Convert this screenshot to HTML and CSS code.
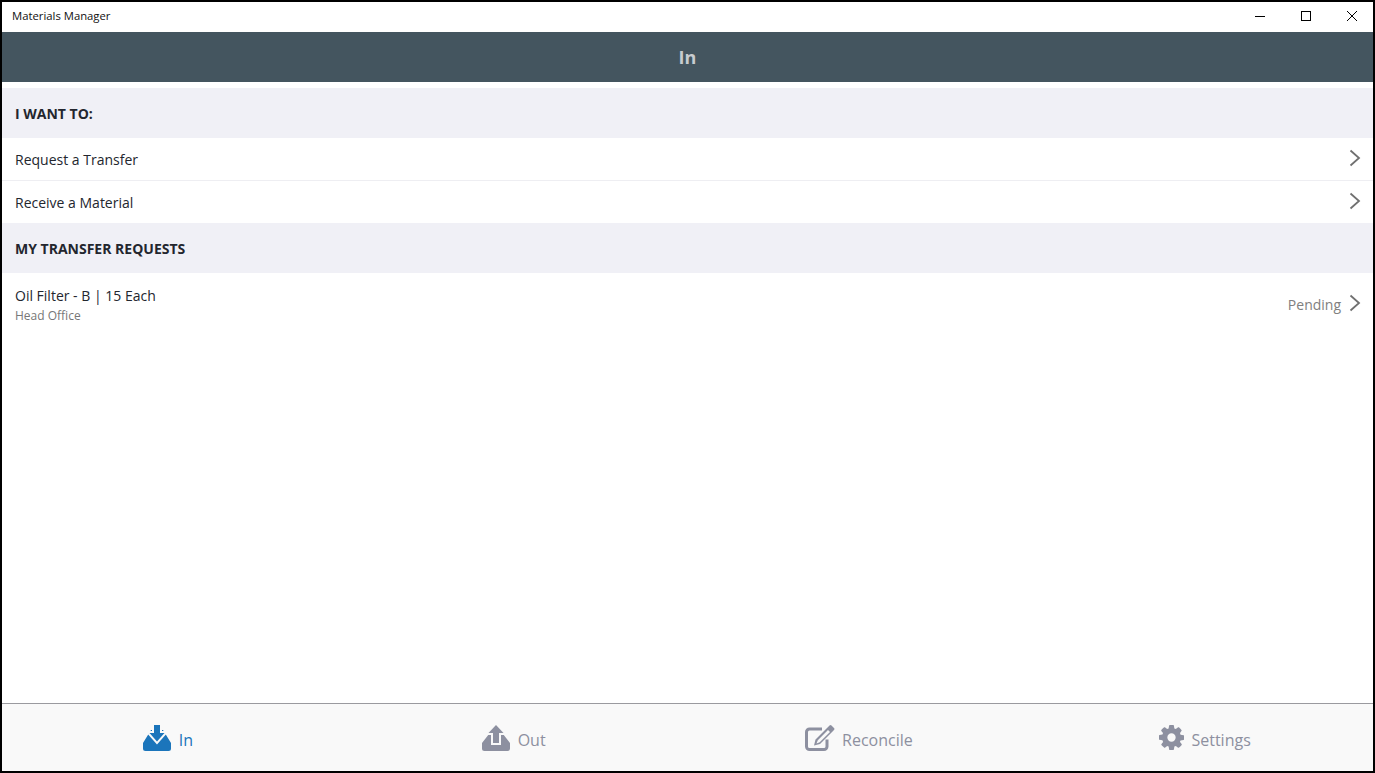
FILE: index.html
```html
<!DOCTYPE html>
<html lang="en">
<head>
<meta charset="utf-8">
<title>Materials Manager</title>
<link rel="stylesheet" href="styles.css">
</head>
<body>
<div class="window">
  <div class="titlebar">
    <span class="app-name">Materials Manager</span>
    <div class="controls">
      <svg class="ctl" viewBox="0 0 46 30"><path d="M20 14.500h10" stroke="#000" fill="none"/></svg>
      <svg class="ctl" viewBox="0 0 46 30"><rect x="20.500" y="9.500" width="9" height="9" stroke="#000" fill="none"/></svg>
      <svg class="ctl" viewBox="0 0 46 30"><path d="M20 9l10 10M30 9L20 19" stroke="#000" fill="none"/></svg>
    </div>
  </div>
  <header class="page-head">In</header>
  <main class="content">
    <div class="section-head">I WANT TO:</div>
    <div class="row line">
      <span class="row-title">Request a Transfer</span>
      <svg class="chev" viewBox="0 0 12 18"><path d="M1.500 1.500L10 9l-8.500 7.500"/></svg>
    </div>
    <div class="row">
      <span class="row-title">Receive a Material</span>
      <svg class="chev" viewBox="0 0 12 18"><path d="M1.500 1.500L10 9l-8.500 7.500"/></svg>
    </div>
    <div class="section-head">MY TRANSFER REQUESTS</div>
    <div class="row tall">
      <div class="stack">
        <span class="row-title">Oil Filter - B | 15 Each</span>
        <span class="row-sub">Head Office</span>
      </div>
      <span class="status">Pending</span>
      <svg class="chev" viewBox="0 0 12 18"><path d="M1.500 1.500L10 9l-8.500 7.500"/></svg>
    </div>
  </main>
  <nav class="tabs">
    <div class="tab active">
      <svg class="tab-icon" viewBox="0 0 30 26">
        <path class="tray" d="M9 5L1 18v5.500A2.500 2.500 0 0 0 3.500 26h23a2.500 2.500 0 0 0 2.500-2.500V18L21 5z"/>
        <path class="arrow" d="M12 0h6v8h4.500L15 16.500 7.500 8H12z"/>
      </svg>
      <span>In</span>
    </div>
    <div class="tab">
      <svg class="tab-icon" viewBox="0 0 30 26">
        <path class="tray" d="M8 9L1 18v5.500A2.500 2.500 0 0 0 3.500 26h23a2.500 2.500 0 0 0 2.500-2.500V18L22 9z"/>
        <path class="arrow" d="M15 0l7.500 8H18v10h-6V8H7.500z"/>
      </svg>
      <span>Out</span>
    </div>
    <div class="tab">
      <svg class="tab-icon" viewBox="0 0 30 26">
        <path class="outline" d="M22 14.500V21.500a3 3 0 0 1-3 3H4.500a3 3 0 0 1-3-3V7a3 3 0 0 1 3-3H17"/>
        <path class="pencil" d="M24.500 0.500a1.500 1.500 0 0 1 2 0l2.500 2.500a1.500 1.500 0 0 1 0 2L15 19l-6 1.500L10.500 14.500zM12.800 15.200l-1.300 3.400 3.200-1.400L25 7l-2-2z"/>
      </svg>
      <span>Reconcile</span>
    </div>
    <div class="tab">
      <svg class="tab-icon gear" viewBox="128 128 1536 1536">
        <path class="tray" d="M1152 896q0-106-75-181t-181-75-181 75-75 181 75 181 181 75 181-75 75-181zm512-109v222q0 12-8 23t-20 13l-185 28q-19 54-39 91 35 50 107 138 10 12 10 25t-9 23q-27 37-99 108t-94 71q-12 0-26-9l-138-108q-44 23-91 38-16 136-29 186-7 28-36 28h-222q-14 0-24.500-8.500t-11.500-21.500l-28-184q-49-16-90-37l-141 107q-10 9-25 9-14 0-25-11-126-114-165-168-7-10-7-23 0-12 8-23 15-21 51-66.500t54-70.500q-27-50-41-99l-183-27q-13-2-21-12.500t-8-23.500v-222q0-12 8-23t19-13l186-28q14-46 39-92-40-57-107-138-10-12-10-24 0-10 9-23 26-36 98.500-107.500t94.500-71.500q13 0 26 10l138 107q44-23 91-38 16-136 29-186 7-28 36-28h222q14 0 24.500 8.500t11.500 21.500l28 184q49 16 90 37l142-107q9-9 24-9 13 0 25 10 129 119 165 170 7 8 7 22 0 12-8 23-15 21-51 66.500t-54 70.500q26 50 41 98l183 28q13 2 21 12.500t8 23.500z"/>
      </svg>
      <span>Settings</span>
    </div>
  </nav>
</div>
</body>
</html>
```
FILE: styles.css
```css
* { box-sizing: border-box; }
html, body { margin: 0; height: 100%; }
body { font-family: "Open Sans", sans-serif; background: #fff; overflow: hidden; }
.window { height: 773px; border: 2px solid #000; display: flex; flex-direction: column; background: #fff; }
.titlebar { height: 30px; display: flex; align-items: flex-start; justify-content: space-between; flex: none; }
.app-name { font-size: 11.300px; line-height: 28px; color: #111; padding-left: 10px; }
.controls { display: flex; }
.ctl { width: 46px; height: 30px; display: block; }
.page-head { height: 50px; flex: none; background: #44555f; color: #c8ccd0; font-size: 18px; font-weight: 700; display: flex; align-items: center; justify-content: center; }
.content { flex: 1; padding-top: 6px; }
.section-head { height: 50px; background: #f0f0f6; color: #23262e; font-size: 14px; font-weight: 700; display: flex; align-items: center; padding-left: 13px; }
.row { height: 42px; display: flex; align-items: center; padding: 0 12px 0 13px; }
.row.line { height: 43px; border-bottom: 1px solid #eeeef2; }
.row.tall { height: 62px; }
.row-title { font-size: 14px; color: #23262e; flex: 1; }
.stack { flex: 1; display: flex; flex-direction: column; }
.row-sub { font-size: 12px; color: #777; margin-top: 2px; margin-bottom: -1px; }
.status { font-size: 14px; color: #808080; margin-right: 8px; }
.chev { width: 12px; height: 18px; flex: none; margin-bottom: 2px; }
.chev path { fill: none; stroke: #707070; stroke-width: 1.800; }
.tabs { height: 68px; flex: none; background: #f9f9f9; border-top: 1px solid #9a9a9f; display: grid; grid-template-columns: repeat(4, 1fr); }
.tab { display: flex; align-items: center; justify-content: center; gap: 7px; color: #8d90a0; font-size: 16px; }
.tab span { margin-top: 4px; }
.tab:nth-child(1) { padding-right: 12px; }
.tab:nth-child(2) { padding-right: 6px; }
.tab:nth-child(4) { padding-left: 7px; }
.tab-icon { width: 30px; height: 26px; flex: none; }
.tab-icon.gear { width: 25px; height: 25px; }
.tray { fill: #8d90a0; }
.arrow { fill: #8d90a0; stroke: #f9f9f9; stroke-width: 4; paint-order: stroke; }
.outline { fill: none; stroke: #8d90a0; stroke-width: 3; }
.pencil { fill: #8d90a0; fill-rule: evenodd; }
.tab.active { color: #1b75bb; }
.tab.active .tray, .tab.active .arrow { fill: #1b75bb; }
```
